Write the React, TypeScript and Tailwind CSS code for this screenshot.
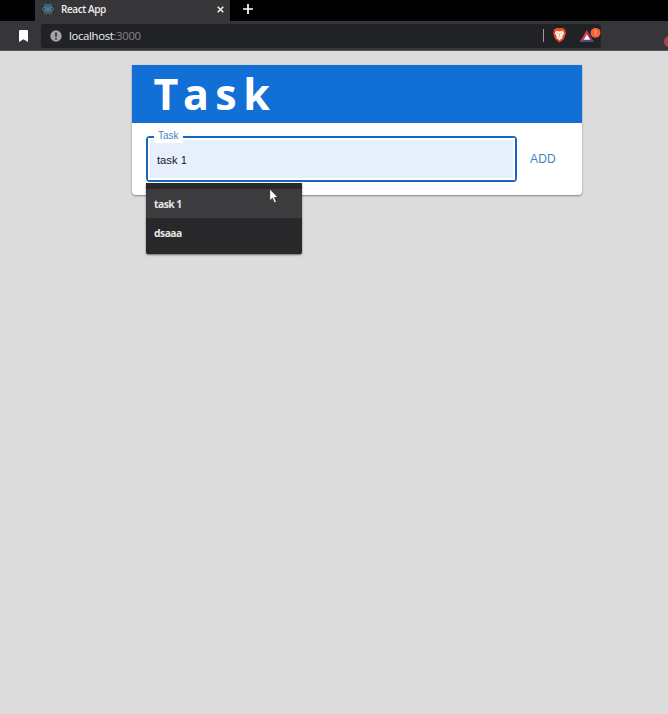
import React from "react";

function ReactLogo() {
  return (
    <svg width="12" height="12" viewBox="0 0 24 24" fill="none" stroke="#568fad" strokeWidth="1.6">
      <ellipse cx="12" cy="12" rx="11" ry="4.3" />
      <ellipse cx="12" cy="12" rx="11" ry="4.3" transform="rotate(60 12 12)" />
      <ellipse cx="12" cy="12" rx="11" ry="4.3" transform="rotate(120 12 12)" />
      <circle cx="12" cy="12" r="2" fill="#568fad" />
    </svg>
  );
}

function TabStrip() {
  return (
    <div className="flex h-[21px] bg-black pl-[35px]">
      <div className="flex h-[22px] w-[195px] items-center bg-[#363538] pb-[4px] pl-[7px] pr-[6px]">
        <ReactLogo />
        <span className="ml-[7px] text-[10px] font-semibold tracking-[-0.4px] text-[#ededee]">React App</span>
        <svg className="ml-auto" width="7" height="7" viewBox="0 0 7 7" stroke="#f0f0f0" strokeWidth="1.5">
          <path d="M.7.7l5.6 5.6M6.3.7L.7 6.3" />
        </svg>
      </div>
      <svg className="ml-[13px] mt-[4px]" width="10" height="10" viewBox="0 0 10 10" stroke="#fff" strokeWidth="1.7">
        <path d="M5 0v10M0 5h10" />
      </svg>
    </div>
  );
}

function Toolbar() {
  return (
    <div className="flex h-[30px] items-center overflow-hidden border-b border-[#55555a] bg-[#363539]">
      <svg className="ml-[19px] shrink-0" width="9" height="12" viewBox="0 0 9 12">
        <path d="M1.2 0h6.6Q9 0 9 1.2V12L4.5 9.2 0 12V1.2Q0 0 1.2 0z" fill="#fff" />
      </svg>
      <div className="ml-[13px] flex h-[24px] w-[560px] shrink-0 items-center rounded-[3px] bg-[#212226] pl-[9px]">
        <svg width="12" height="12" viewBox="0 0 12 12">
          <circle cx="6" cy="6" r="5.7" fill="#a3a4a7" />
          <path d="M6 2.6v4.1M6 8v1.5" stroke="#29292d" strokeWidth="1.6" />
        </svg>
        <span className="ml-[7px] text-[11.4px] tracking-[-0.36px] text-[#f0f0f2]">
          localhost<span className="text-[#858589]">:3000</span>
        </span>
        <span className="ml-auto h-[13px] w-px bg-[#9b9b9f]" />
        <svg className="ml-[9px]" width="13" height="15" viewBox="0 0 13 15">
          <path d="M3 0h7l1.4 1.6 1.2.2-.4 2L13 5l-2.1 6-4.4 3.6L2.1 11 0 5l.8-1.2-.4-2 1.2-.2z" fill="#ec4e23" />
          <path d="M3.2 2.7l3.3.7 3.3-.7 1.3 2.6-1.8 3.2.2 1.3-3 2.4-3-2.4.2-1.3-1.8-3.2z" fill="#fff3ed" />
          <path d="M3.8 5l1.8.7M9.2 5l-1.8.7M6.5 5.8v2.4M5.5 9l1 .6 1-.6" stroke="#c98a78" strokeWidth=".7" fill="none" />
        </svg>
        <svg className="ml-[13px] mr-0" width="22" height="16" viewBox="0 0 22 16">
          <path d="M8 2L1 14h14z" fill="#a33458" />
          <path d="M8 2L1 14l7-4z" fill="#db463d" />
          <path d="M1 14l7-4 7 4z" fill="#514797" />
          <path d="M8 6.5l-3.2 5.2h6.4z" fill="#fff" />
          <circle cx="16.5" cy="4.8" r="4.9" fill="#fa6335" />
          <path d="M15.7 3.2l1-.7v4.3" fill="none" stroke="#ffc1a9" strokeWidth=".9" />
        </svg>
      </div>
      <span className="ml-[63px] mt-[12px] h-[11px] w-[11px] shrink-0 rounded-full bg-[#a9464b]" />
    </div>
  );
}

function Suggestions() {
  return (
    <div className="absolute left-[-2px] top-[45px] z-10 h-[71px] w-[156px] rounded-b-[2px] bg-[#28282b] pt-[6px] font-['Open_Sans','Noto_Sans',sans-serif] text-[10.3px] font-bold tracking-[-0.5px] text-[#e5e5e6] shadow-[0_1px_2px_rgba(0,0,0,0.5)]">
      <div className="flex h-[29px] items-center bg-[#3c3c3f] px-[8px] pt-[2px]">task 1</div>
      <div className="flex h-[30px] items-center px-[8px] pt-[2px]">dsaaa</div>
      <svg className="absolute left-[123px] top-[5px]" width="10" height="16" viewBox="0 0 10 16">
        <path d="M.7.8v12.1l2.7-2.6 2 4.6 2.1-.9-2-4.4h3.6z" fill="#fff" stroke="#242426" strokeWidth=".8" />
      </svg>
    </div>
  );
}

function TaskField() {
  return (
    <div className="relative h-[46px] w-[371px] rounded-[4px] border-2 border-[#1767bd] bg-white font-['Liberation_Sans',Arial,sans-serif]">
      <div className="flex h-full w-full items-center border-2 border-white bg-[#e7effd] pl-[7px] pt-[3px] text-[11.2px] text-[#17191d]">
        task 1
      </div>
      <span className="absolute left-[6px] top-[-9px] bg-white px-[4px] text-[10px] leading-[14px] text-[#477fc5]">Task</span>
      <Suggestions />
    </div>
  );
}

export default function App() {
  return (
    <div className="h-[714px] w-[668px] overflow-hidden bg-[#dcdcdd] font-['Open_Sans','Noto_Sans',sans-serif]">
      <TabStrip />
      <Toolbar />
      <main className="pl-[132px] pt-[14px]">
        <section className="h-[130px] w-[450px] rounded-b-[4px] bg-white shadow-[0_1px_2px_rgba(0,0,0,0.4)]">
          <h1 className="flex h-[58px] items-center bg-[#126fd6] pb-px pl-[19px] text-[43px] font-bold leading-none text-white">
            <span className="w-[30px] text-center">T</span>
            <span className="w-[30px] text-center">a</span>
            <span className="w-[30px] text-center">s</span>
            <span className="w-[31px] text-center">k</span>
          </h1>
          <div className="flex items-center pl-[14px] pt-[13px]">
            <TaskField />
            <button className="ml-[13px] font-['Liberation_Sans',Arial,sans-serif] text-[12px] tracking-[0.2px] text-[#497fbd]">ADD</button>
          </div>
        </section>
      </main>
    </div>
  );
}
